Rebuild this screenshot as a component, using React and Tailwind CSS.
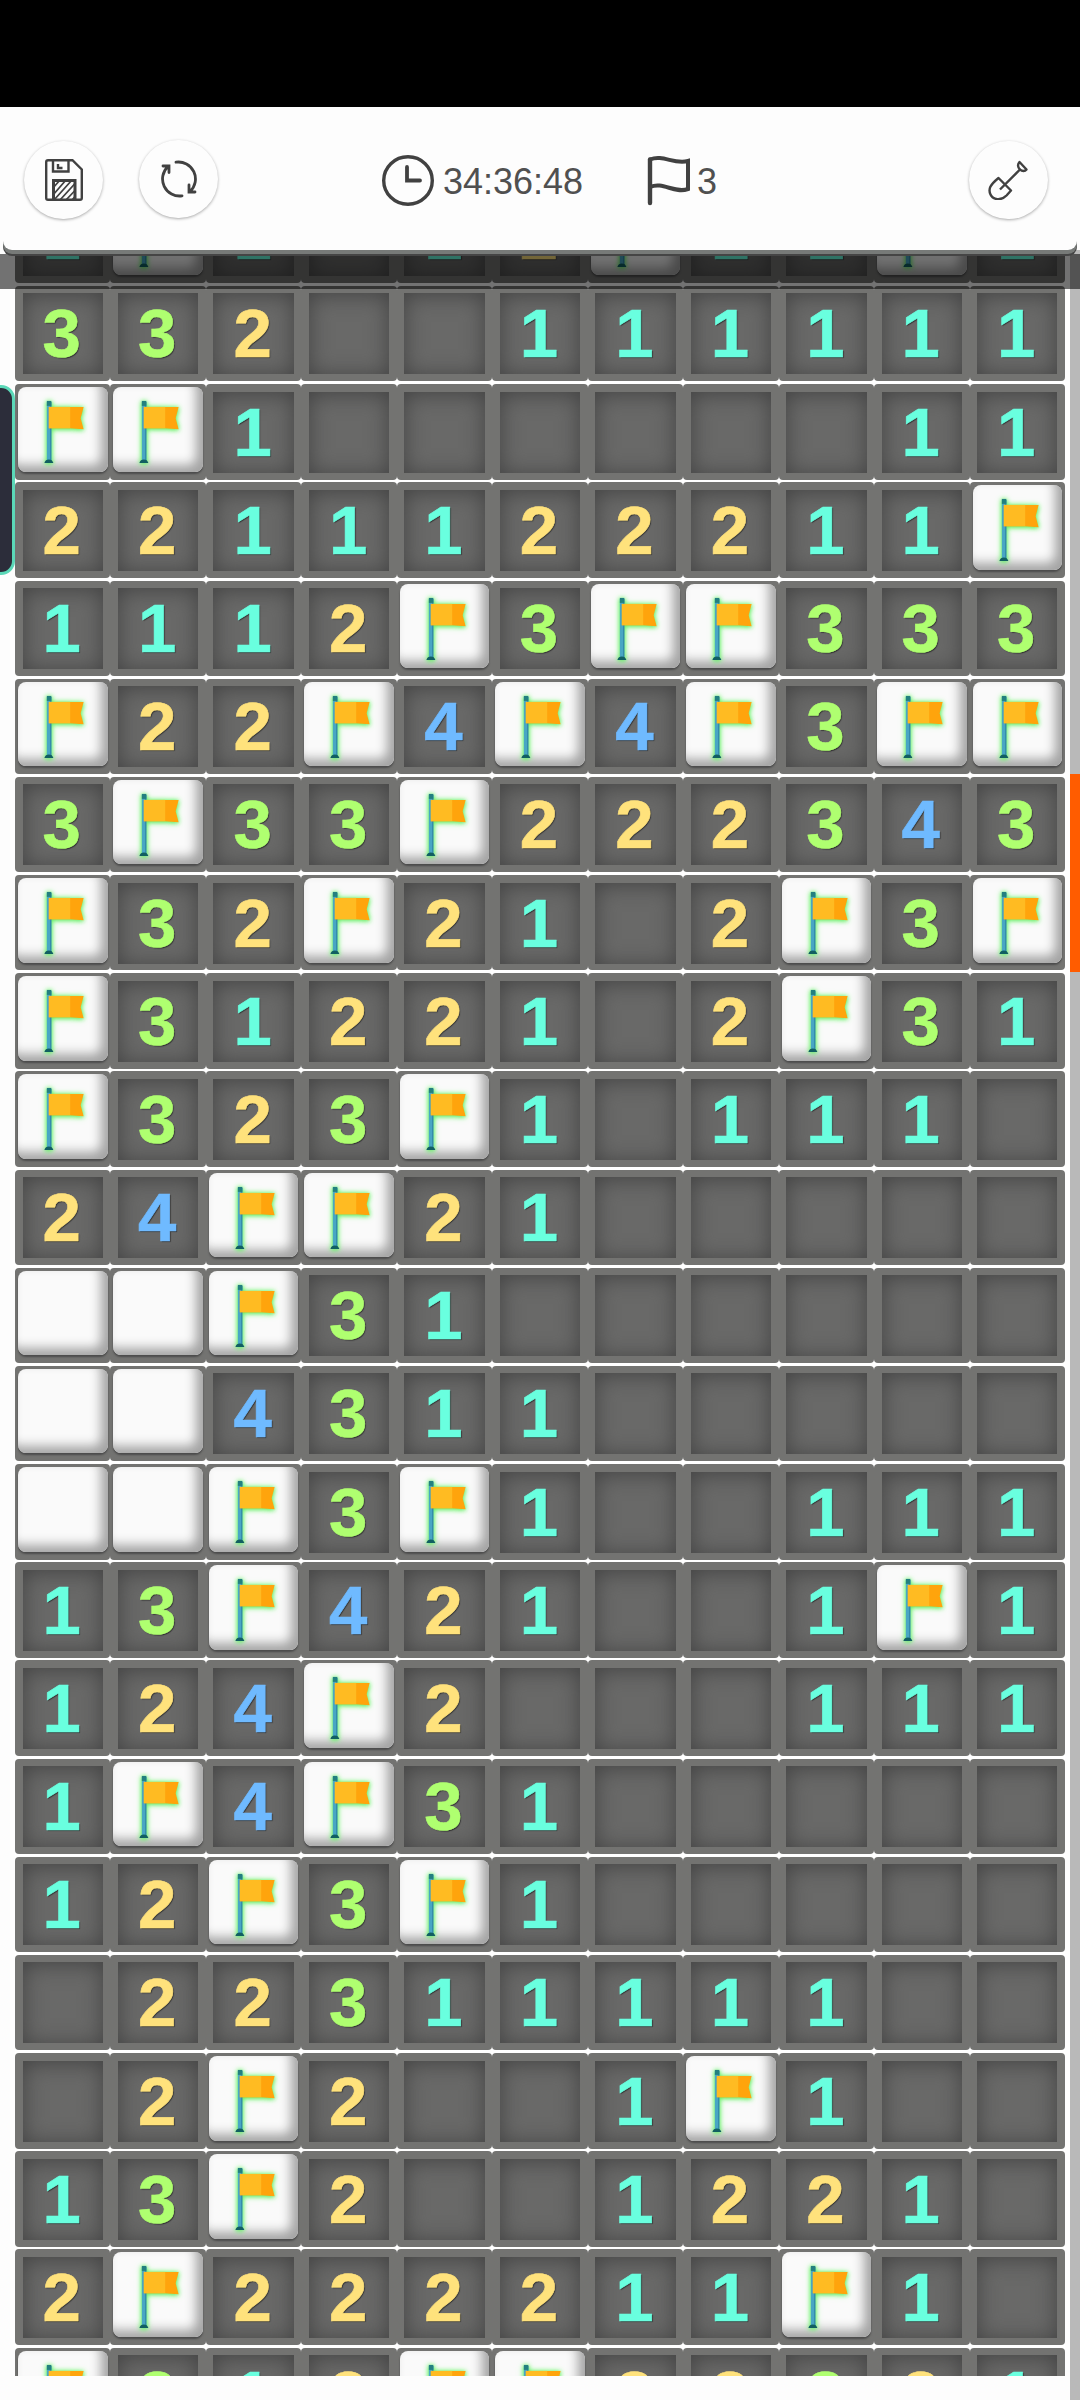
const rows = [
  '1F1.12F11F1',
  '332..111111',
  'FF1......11',
  '2211122211F',
  '1112F3FF333',
  'F22F4F4F3FF',
  '3F33F222343',
  'F32F21.2F3F',
  'F31221.2F31',
  'F323F1.111.',
  '24FF21.....',
  'UUF31......',
  'UU4311.....',
  'UUF3F1..111',
  '13F421..1F1',
  '124F2...111',
  '1F4F31.....',
  '12F3F1.....',
  '.22311111..',
  '.2F2..1F1..',
  '13F2..1221.',
  '2F222211F1.',
  'F312FF22321',
];

const colors = {
  1: 'text-[#69ffdf]',
  2: 'text-[#ffe27c]',
  3: 'text-[#afff70]',
  4: 'text-[#6fbaff]',
};

function Flag() {
  return (
    <svg className="h-full w-full overflow-visible" viewBox="0.500 0 90 85">
      <g className="[filter:drop-shadow(0_1px_2px_#4fe04fb0)_drop-shadow(0_0_2.5px_#7dff7d)]">
        <rect x="29.500" y="15" width="4.500" height="60" fill="#48a6c4" />
        <rect x="33" y="15" width="1" height="60" fill="#2c7fa0" />
        <rect x="29.500" y="14" width="4.500" height="5" fill="#23807f" />
        <path d="M27 76.500 Q28 73 31.500 73 Q35 73 36 76.500Z" fill="#115f61" />
        <path d="M31.500 20 H66.500 L63.500 31.500 L66.500 42.500 L52 41.500 H31.500Z" fill="#ffa40c" />
        <path d="M31.500 20 H53 V41.500 H31.500Z" fill="#ffbb22" />
      </g>
    </svg>
  );
}

function Cell({ kind }) {
  const raised = kind === 'F' || kind === 'U';
  if (raised) {
    return (
      <div className="h-[95.4545px] rounded-[4px] bg-[#737371] px-[3px] pt-[3px]">
        <div className="h-[84.5px] w-[89.5px] rounded-[8px] bg-[#fafafa] shadow-[inset_-7px_-7px_11px_0px_#a4a4a4,0_2px_2px_#4b4b4b]">
          {kind === 'F' && <Flag />}
        </div>
      </div>
    );
  }
  return (
    <div className="h-[95.4545px] rounded-[4px] bg-[#737371] p-[7.5px]">
      <div className="flex h-[81px] w-full items-center justify-center bg-[#696968] pr-[2px] text-[69px] leading-none font-bold shadow-[inset_0_2px_22px_#424242]">
        {kind !== '.' && (
          <span className={`${colors[kind]} [-webkit-text-stroke:0.6px_currentColor] [text-shadow:1px_1px_1px_#333]`}>{kind}</span>
        )}
      </div>
    </div>
  );
}

function RoundButton({ children, className }) {
  return (
    <div className={`flex h-[78px] w-[79px] items-center justify-center rounded-full bg-[#fdfdfd] shadow-[0_1px_3px_#aaa] ${className}`}>
      {children}
    </div>
  );
}

function SaveIcon() {
  return (
    <svg className="h-[42px] w-[38px]" viewBox="0 0 38 42" fill="none" stroke="#414141" strokeWidth="2.400">
      <path d="M3 1.200 H27.500 L36.800 10.500 V39 Q36.800 40.800 35 40.800 H3 Q1.200 40.800 1.200 39 V3 Q1.200 1.200 3 1.200Z" />
      <path d="M8 1 V12.500 H23.500 V1 M13 5 V9 H17.500" />
      <path d="M8.500 41 V21.500 H30 V41" strokeWidth="3" />
      <path d="M8 29 L15 21 M8 36 L21 21 M9 41 L27 21 M15 41 L30.500 24 M21 41 L30.500 31 M27 41 L30.500 37" strokeWidth="1.800" />
    </svg>
  );
}

function RefreshIcon() {
  return (
    <svg className="h-[38px] w-[38px]" viewBox="0 0 38 38" fill="none" stroke="#414141" strokeWidth="2.800" strokeLinecap="round">
      <path d="M16 2.200 A17 17 0 0 1 30 31.500 M29 25 V32 H35" />
      <path d="M22 35.800 A17 17 0 0 1 8 6.500 M3 6 H9 V12.500" />
    </svg>
  );
}

function ShovelIcon() {
  return (
    <svg className="-ml-[2px] h-[40px] w-[40px]" viewBox="0 0 40 40" fill="none" stroke="#414141" strokeWidth="2.400" strokeLinejoin="round">
      <path d="M10.500 18 L23 30.500 L18.500 35.500 C13 41 5 40 2.500 34.500 C0 29 2 25 10.500 18Z M12 29.500 L32 9.500" />
      <path d="M31.500 2 C29.500 4 29.500 7.500 32 9.500 C34 11.500 37 11.500 38.500 9.500Z" />
    </svg>
  );
}

export default function App() {
  return (
    <div className="relative h-[2400px] w-[1080px] overflow-hidden bg-[#fdfdfd] font-['Liberation_Sans',sans-serif]">
      <div className="h-[107px] bg-black" />
      <header className="relative z-20 mx-[3px] flex h-[143px] items-start rounded-b-[9px] bg-[#fdfdfd] shadow-[0_4px_0_#777a78,0_6px_0_#454545]">
        <RoundButton className="mt-[34px] ml-[21px]"><SaveIcon /></RoundButton>
        <RoundButton className="mt-[33px] ml-[36px]"><RefreshIcon /></RoundButton>
        <svg className="mt-[48px] ml-[164px] h-[51px] w-[52px] shrink-0" viewBox="0 0 52 51" fill="none" stroke="#414141" strokeWidth="3.400" strokeLinecap="round">
          <ellipse cx="26" cy="25.500" rx="24.300" ry="23.800" />
          <path d="M25 12 V25.500 H38" strokeWidth="3.800" />
        </svg>
        <span className="mt-[55px] ml-[9px] w-[140px] text-[36px] leading-[40px] text-[#505050]">34:36:48</span>
        <svg className="mt-[48px] ml-[64px] h-[51px] w-[44px] shrink-0" viewBox="0 0 44 51" fill="none" stroke="#414141" strokeWidth="4.400">
          <path d="M3 48 V4.500" strokeLinecap="round" />
          <path d="M3 4.500 C16 -1 27 10 41 6 V34 C27 39 16 26 3 32" strokeWidth="4" />
        </svg>
        <span className="mt-[55px] ml-[6px] text-[36px] leading-[40px] text-[#505050]">3</span>
        <RoundButton className="mt-[34px] mr-[29px] ml-auto"><ShovelIcon /></RoundButton>
      </header>
      <main className="flex h-[2150px] justify-between">
        <div className="h-[2126px] overflow-hidden pl-[15px]">
          <div className="-mt-[62.2px] grid w-[1050px] grid-cols-11 gap-y-[2.727px] bg-white">
            {rows.flatMap((row, r) => row.split('').map((kind, c) => <Cell key={`${r}-${c}`} kind={kind} />))}
          </div>
        </div>
        <div className="w-[10px] bg-[#b9b9b9] pt-[524px]">
          <div className="h-[198px] bg-[#ff5c00]" />
        </div>
      </main>
      <div className="absolute top-[254px] left-0 z-10 h-[35px] w-full bg-black/55" />
      <div className="absolute top-[385px] -left-[20px] h-[190px] w-[35px] rounded-[14px] border-[3px] border-[#5bd8b8] bg-[#2c2d3a]" />
    </div>
  );
}
